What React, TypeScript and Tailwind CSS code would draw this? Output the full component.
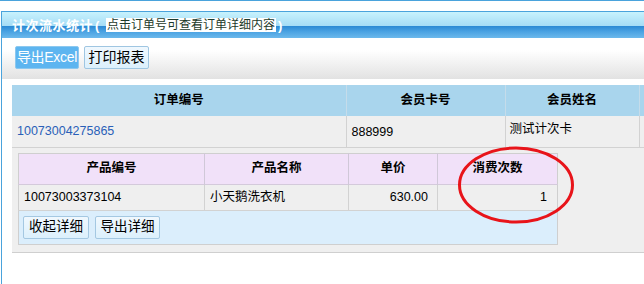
import React from "react";

const font = { fontFamily: '"Liberation Sans", Arial, "Noto Sans CJK SC", sans-serif' };

export default function App() {
  return (
    <div className="relative w-[644px] h-[284px] overflow-hidden bg-white text-black" style={font}>
      <div className="h-[1px] bg-[#4aa3dc]" />
      <div className="h-[10px] bg-white" />
      <div className="border-t border-l border-[#4aa3dc] h-[273px] ml-[1px]">
        {/* title bar */}
        <div className="h-[26px] flex items-center pl-[10px] whitespace-nowrap bg-[linear-gradient(to_bottom,#c8f2fd_0%,#a6ddf6_52%,#2b89d4_54%,#4aa2e2_75%,#6cb9ec_100%)]">
          <span className="text-white font-bold text-[13px] leading-none tracking-[0.5px]">计次流水统计</span>
          <span className="inline-block w-[13px] pl-[2px] text-white font-bold text-[13px] leading-none">(</span>
          <span className="bg-white text-[#1d3a2a] text-[12px] leading-[14px] px-[1px]">点击订单号可查看订单详细内容</span>
          <span className="pl-[2px] text-white font-bold text-[13px] leading-none">)</span>
        </div>
        {/* toolbar */}
        <div className="h-[41px] flex items-start gap-[5px] pl-[13px] pt-[8px] bg-[linear-gradient(to_bottom,#ffffff_0%,#ffffff_30%,#e2e2e2_100%)]">
          <div className="h-[23px] w-[64px] flex items-center justify-center whitespace-nowrap bg-[#5db5f0] border border-[#8cc8ef] rounded-[2px] text-white text-[14px] tracking-[-0.3px]">
            导出Excel
          </div>
          <div className="h-[23px] w-[65px] flex items-center justify-center whitespace-nowrap bg-[linear-gradient(to_bottom,#f0f8fe,#dcf0fc)] border border-[#9fc6e2] rounded-[2px] text-black text-[14px]">
            打印报表
          </div>
        </div>
        <div className="h-[6px]" />
        {/* main table */}
        <table className="ml-[10px] border-collapse table-fixed w-[760px]">
          <colgroup>
            <col className="w-[334px]" />
            <col className="w-[159px]" />
            <col className="w-[134px]" />
            <col />
          </colgroup>
          <thead>
            <tr className="h-[31px] bg-[#a9d5ed]">
              <th className="border-r border-[#c5dcea] font-bold text-[12.5px] text-center">订单编号</th>
              <th className="border-r border-[#c5dcea] font-bold text-[12.5px] text-center">会员卡号</th>
              <th className="border-r border-[#c5dcea] font-bold text-[12.5px] text-center">会员姓名</th>
              <th />
            </tr>
          </thead>
          <tbody>
            <tr className="h-[31px] bg-[#efefef] border-b border-[#d2d2d2]">
              <td className="border-r border-[#d2d2d2] pl-[5px] text-[12.5px] text-[#2a5fb8]">10073004275865</td>
              <td className="border-r border-[#d2d2d2] pl-[5px] text-[12.5px] pt-[3px]">888999</td>
              <td className="border-r border-[#d2d2d2] pl-[4px] text-[12.5px] pb-[3px]">测试计次卡</td>
              <td />
            </tr>
            <tr className="bg-[#efefef] border-b border-[#cfcfcf]">
              <td colSpan={4} className="pl-[6px] pt-[5px] pb-[7px]">
                <table className="border-collapse table-fixed w-[539px] border border-[#cfcfcf]">
                  <colgroup>
                    <col className="w-[186px]" />
                    <col className="w-[144px]" />
                    <col className="w-[89px]" />
                    <col className="w-[120px]" />
                  </colgroup>
                  <thead>
                    <tr className="h-[31px] bg-[#f1e1f9] border-b border-[#d4cadb]">
                      <th className="border-r border-[#d0c8d8] font-bold text-[12.5px] text-center">产品编号</th>
                      <th className="border-r border-[#d0c8d8] font-bold text-[12.5px] text-center">产品名称</th>
                      <th className="border-r border-[#d0c8d8] font-bold text-[12.5px] text-center">单价</th>
                      <th className="font-bold text-[12.5px] text-center">消费次数</th>
                    </tr>
                  </thead>
                  <tbody>
                    <tr className="h-[26px] bg-[#efefef] border-b border-[#d2d2d2]">
                      <td className="border-r border-[#d2d2d2] pl-[5px] text-[12.5px]">10073003373104</td>
                      <td className="border-r border-[#d2d2d2] pl-[5px] text-[12.5px]">小天鹅洗衣机</td>
                      <td className="border-r border-[#d2d2d2] pr-[9px] text-right text-[12.5px]">630.00</td>
                      <td className="pr-[10px] text-right text-[12.5px]">1</td>
                    </tr>
                    <tr className="h-[34px] bg-[#dbeefc]">
                      <td colSpan={4} className="pl-[4px]">
                        <div className="flex gap-[6px]">
                          <div className="h-[23px] w-[66px] flex items-center justify-center whitespace-nowrap bg-[linear-gradient(to_bottom,#f0f8fe,#dcf0fc)] border border-[#a4c8e2] rounded-[2px] text-[13.5px]">
                            收起详细
                          </div>
                          <div className="h-[23px] w-[65px] flex items-center justify-center whitespace-nowrap bg-[linear-gradient(to_bottom,#f0f8fe,#dcf0fc)] border border-[#a4c8e2] rounded-[2px] text-[13.5px]">
                            导出详细
                          </div>
                        </div>
                      </td>
                    </tr>
                  </tbody>
                </table>
              </td>
            </tr>
          </tbody>
        </table>
      </div>
      {/* red ellipse annotation */}
      <svg className="absolute left-[455px] top-[143px]" width="122" height="84" viewBox="0 0 122 84">
        <ellipse cx="61" cy="42" rx="56.5" ry="37" fill="none" stroke="#e8141a" strokeWidth="3" />
      </svg>
    </div>
  );
}
